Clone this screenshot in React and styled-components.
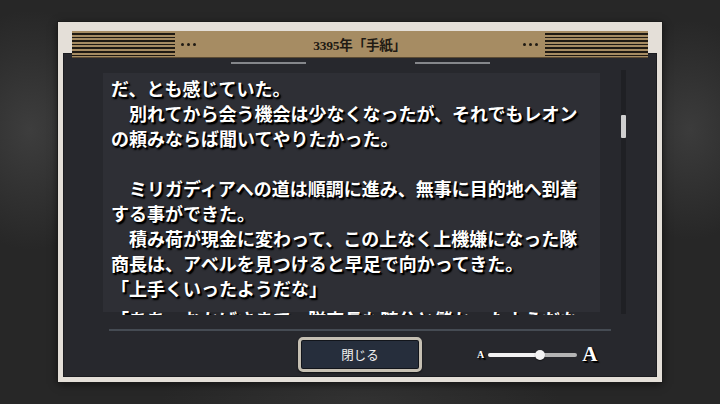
import styled, { createGlobalStyle } from 'styled-components';

const GlobalStyle = createGlobalStyle`
  html, body {
    margin: 0;
    padding: 0;
    background: #262626;
  }
  * {
    box-sizing: border-box;
  }
`;

const Page = styled.div`
  width: 720px;
  height: 404px;
  display: flex;
  align-items: flex-start;
  padding: 22px 0 0 58px;
  overflow: hidden;
  background:
    radial-gradient(ellipse 90px 120px at 30px 130px, rgba(80, 80, 80, 0.55), transparent),
    radial-gradient(ellipse 80px 110px at 690px 130px, rgba(80, 80, 80, 0.5), transparent),
    radial-gradient(ellipse 200px 80px at 360px 404px, rgba(70, 70, 70, 0.35), transparent),
    #272727;
`;

const Frame = styled.div`
  width: 604px;
  height: 360px;
  background: #e4dfd8;
  padding: 9px 5px 5px 5px;
  display: flex;
  flex-direction: column;
  box-shadow: 0 0 0 1px #1c1c1c, 0 2px 8px rgba(0, 0, 0, 0.6);
`;

const Header = styled.div`
  position: relative;
  z-index: 1;
  height: 26px;
  margin: 0 9px -4px 9px;
  display: flex;
  align-items: center;
  background: #a68c63;
  box-shadow: 0 1px 0 #5b4b33;
`;

const Stripes = styled.div`
  width: 103px;
  height: 100%;
  background: repeating-linear-gradient(
    to bottom,
    #a68c63 0,
    #a68c63 2px,
    #1f1a13 2px,
    #1f1a13 3.6px
  );
`;

const Dots = styled.div`
  display: flex;
  gap: 3px;
  margin: ${(p) => (p.$side === 'left' ? '0 0 0 6px' : '0 7px 0 0')};
`;

const Dot = styled.span`
  width: 3px;
  height: 3px;
  border-radius: 50%;
  background: #1f1a13;
`;

const Title = styled.div`
  flex: 1;
  text-align: center;
  font-family: "Liberation Serif", "Noto Sans CJK JP", serif;
  font-size: 13.5px;
  font-weight: 700;
  color: #1f1a13;
  letter-spacing: -0.2px;
`;

const Panel = styled.div`
  flex: 1;
  display: flex;
  flex-direction: column;
  padding-top: 4px;
  background: #27282d;
  box-shadow: inset 0 0 0 1px #1b1c20;
`;

const DecoRow = styled.div`
  margin-top: 5px;
  display: flex;
  justify-content: center;
  gap: 109px;
`;

const DecoLine = styled.div`
  width: 75px;
  height: 2px;
  background: #85878b;
`;

const Body = styled.div`
  margin-top: 6px;
  height: 246px;
  display: flex;
  align-items: flex-start;
  padding-left: 40px;
`;

const TextArea = styled.div`
  width: 497px;
  height: 242px;
  margin-top: 3px;
  padding: 3px 0 0 8px;
  overflow: hidden;
  background: linear-gradient(to bottom, #2e2f35 0, #2e2f35 239px, transparent 239px);
`;

const Line = styled.div`
  height: 25px;
  line-height: 25px;
  margin-top: ${(p) => (p.$gap ? '6px' : '0')};
  white-space: nowrap;
  font-family: "Noto Sans CJK JP", sans-serif;
  font-size: 18px;
  font-weight: 700;
  color: #ffffff;
  text-shadow: 1px 1px 0 #000, 2px 2px 1px #000, 1px 2px 2px rgba(0, 0, 0, 0.8);
`;

const Track = styled.div`
  width: 5px;
  height: 244px;
  margin-left: 21px;
  padding-top: 45px;
  background: #1f2024;
`;

const Thumb = styled.div`
  width: 5px;
  height: 23px;
  border-radius: 1px;
  background: #cfcfcf;
`;

const Divider = styled.div`
  margin: 13px 0 0 46px;
  width: 502px;
  height: 2px;
  background: #454b53;
`;

const Footer = styled.div`
  margin-top: 6px;
  height: 35px;
  display: grid;
  grid-template-columns: 1fr auto 1fr;
  align-items: center;
`;

const CloseButton = styled.button`
  grid-column: 2;
  width: 124px;
  height: 35px;
  border: 3px solid #c6c0b3;
  border-radius: 5px;
  background: #262e3c;
  box-shadow: inset 0 0 0 1px #12151b, 0 1px 2px rgba(0, 0, 0, 0.6);
  color: #f2f2f2;
  font-family: "Liberation Serif", "Noto Sans CJK JP", serif;
  font-size: 12.5px;
  cursor: pointer;
`;

const SizeControl = styled.div`
  grid-column: 3;
  display: flex;
  align-items: center;
  margin-left: 55px;
`;

const Letter = styled.span`
  font-family: "Liberation Serif", serif;
  font-weight: 700;
  font-size: ${(p) => p.$size}px;
  color: #ffffff;
  text-shadow: 1px 1px 0 #000, 2px 2px 1px #000;
  line-height: 1;
`;

const SliderTrack = styled.div`
  position: relative;
  width: 89px;
  height: 4px;
  margin: 0 5px 0 4px;
  border-radius: 2px;
  background: linear-gradient(to right, #f2f2f2 0, #f2f2f2 52px, #b4b4b4 52px);
`;

const Knob = styled.div`
  position: absolute;
  left: 47px;
  top: -3px;
  width: 10px;
  height: 10px;
  border-radius: 50%;
  background: #f4f4f4;
  box-shadow: 0 1px 1px rgba(0, 0, 0, 0.5);
`;

const lines = [
  'だ、とも感じていた。',
  '　別れてから会う機会は少なくなったが、それでもレオン',
  'の頼みならば聞いてやりたかった。',
  '',
  '　ミリガディアへの道は順調に進み、無事に目的地へ到着',
  'する事ができた。',
  '　積み荷が現金に変わって、この上なく上機嫌になった隊',
  '商長は、アベルを見つけると早足で向かってきた。',
  '「上手くいったようだな」',
  '「ああ、おかげさまで。隊商長も随分と儲かったようだな」',
];

export default function App() {
  return (
    <>
      <GlobalStyle />
      <Page>
        <Frame>
          <Header>
            <Stripes />
            <Dots $side="left">
              <Dot />
              <Dot />
              <Dot />
            </Dots>
            <Title>3395年「手紙」</Title>
            <Dots $side="right">
              <Dot />
              <Dot />
              <Dot />
            </Dots>
            <Stripes />
          </Header>
          <Panel>
            <DecoRow>
              <DecoLine />
              <DecoLine />
            </DecoRow>
            <Body>
              <TextArea>
                {lines.map((text, i) => (
                  <Line key={i} $gap={i === lines.length - 1}>
                    {text || '\u00a0'}
                  </Line>
                ))}
              </TextArea>
              <Track>
                <Thumb />
              </Track>
            </Body>
            <Divider />
            <Footer>
              <CloseButton>閉じる</CloseButton>
              <SizeControl>
                <Letter $size={10}>A</Letter>
                <SliderTrack>
                  <Knob />
                </SliderTrack>
                <Letter $size={21}>A</Letter>
              </SizeControl>
            </Footer>
          </Panel>
        </Frame>
      </Page>
    </>
  );
}
